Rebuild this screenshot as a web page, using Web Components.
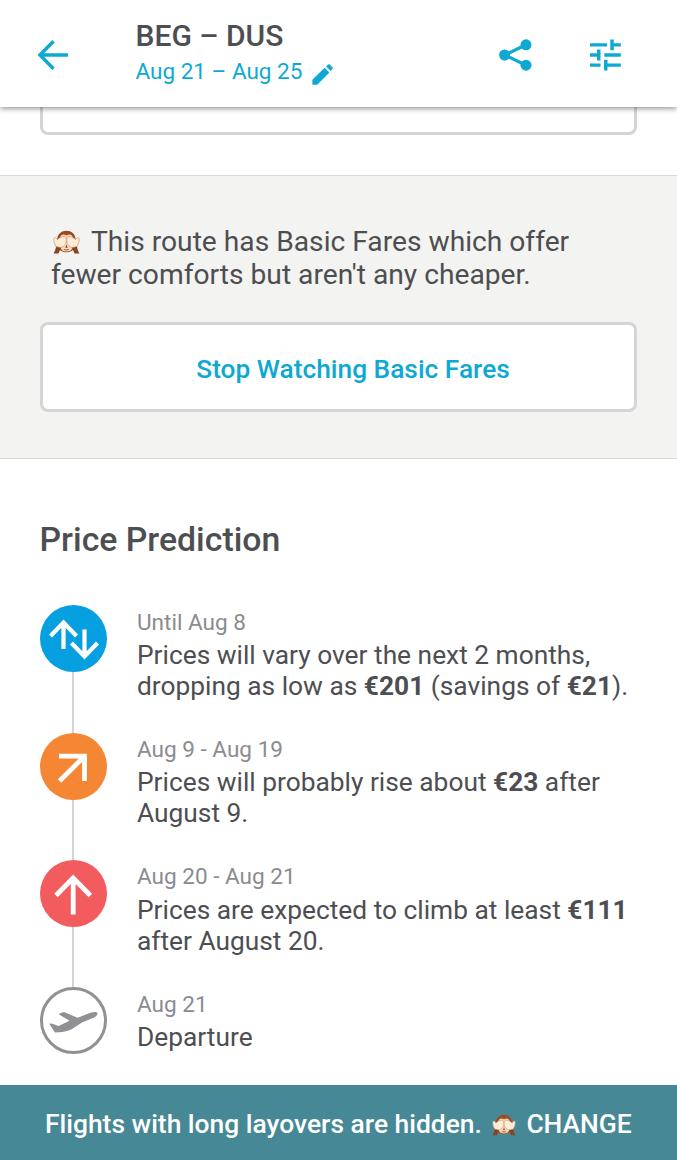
<!DOCTYPE html>
<html lang="en">
<head>
  <meta charset="UTF-8">
  <meta name="viewport" content="width=device-width, initial-scale=1.0">
  <title>BEG – DUS</title>
  <style>
    body {
      margin: 0;
      background: #fff;
      color: #4d4e52;
      font-family: Roboto, sans-serif;
      overflow: hidden;
    }
  </style>
</head>
<body>
  <watch-page>
    <trip-header slot="header" route="BEG – DUS" dates="Aug 21 – Aug 25"></trip-header>
    <card-end></card-end>
    <fare-notice>
      <span><monkey-icon></monkey-icon>This route has Basic Fares which offer<br>fewer comforts but aren't any cheaper.</span>
      <outline-button slot="action">Stop Watching Basic Fares</outline-button>
    </fare-notice>
    <price-prediction heading="Price Prediction">
      <prediction-step kind="vary" when="Until Aug 8">Prices will vary over the next 2 months,<br>dropping as low as <b>€201</b> (savings of <b>€21</b>).</prediction-step>
      <prediction-step kind="rise" when="Aug 9 - Aug 19">Prices will probably rise about <b>€23</b> after<br>August 9.</prediction-step>
      <prediction-step kind="climb" when="Aug 20 - Aug 21">Prices are expected to climb at least <b>€111</b><br>after August 20.</prediction-step>
      <prediction-step kind="departure" when="Aug 21">Departure</prediction-step>
    </price-prediction>
    <hidden-bar slot="footer" action="CHANGE">Flights with long layovers are hidden.</hidden-bar>
  </watch-page>

  <script>
    class WatchPage extends HTMLElement {
      constructor() {
        super();
        this.attachShadow({ mode: 'open' });
        this.shadowRoot.innerHTML = `
          <style>
            :host {
              display: flex;
              flex-direction: column;
              height: 1160px;
              overflow: hidden;
            }
            main {
              flex: 1;
              min-height: 0;
              overflow: hidden;
            }
          </style>
          <slot name="header"></slot>
          <main><slot></slot></main>
          <slot name="footer"></slot>
        `;
      }
    }

    class TripHeader extends HTMLElement {
      connectedCallback() {
        this.attachShadow({ mode: 'open' });
        this.shadowRoot.innerHTML = `
          <style>
            :host {
              display: flex;
              align-items: center;
              box-sizing: border-box;
              flex: none;
              height: 107px;
              padding: 2px 56px 0 38px;
              background: #fff;
              box-shadow: 0 1px 6px rgba(0, 0, 0, 0.5);
              z-index: 1;
            }
            svg {
              display: block;
              flex: none;
              color: #0ea9d3;
            }
            .trip {
              flex: 1;
              margin-left: 66.5px;
              padding-bottom: 2px;
            }
            .route {
              font-size: 30px;
              line-height: 36px;
              font-weight: 500;
              white-space: nowrap;
            }
            .dates {
              display: flex;
              align-items: center;
              font-size: 22.5px;
              line-height: 35px;
              color: #0ea9d3;
              white-space: nowrap;
            }
            .dates svg {
              margin: 5px 0 0 7px;
            }
            .actions {
              display: flex;
              align-items: center;
              gap: 58px;
            }
          </style>
          <svg width="31" height="32" viewBox="0 0 31 32" fill="none" stroke="currentColor" stroke-width="3.4">
            <path d="M30 16H2.5M15.5 2.2 1.9 16l13.6 13.8"/>
          </svg>
          <div class="trip">
            <div class="route">${this.getAttribute('route')}</div>
            <div class="dates">
              <span>${this.getAttribute('dates')}</span>
              <svg width="27" height="27" viewBox="0 0 24 24" fill="currentColor">
                <path d="M3 16.7V21h4.3L18.1 10.2l-4.300-4.300L3 16.700zM20.800 7.100a1.200 1.200 0 0 0 0-1.600l-2.300-2.300a1.200 1.200 0 0 0-1.600 0l-1.700 1.700 4 4 1.600-1.800z"/>
              </svg>
            </div>
          </div>
          <div class="actions">
            <svg width="33" height="32" viewBox="0 0 33 32" fill="currentColor">
              <path d="M27 5.8 5.7 16 27 26.2" fill="none" stroke="currentColor" stroke-width="3.2"/>
              <circle cx="5.6" cy="16" r="5.5"/>
              <circle cx="27" cy="5.8" r="5.5"/>
              <circle cx="27" cy="26.2" r="5.5"/>
            </svg>
            <svg width="31" height="32" viewBox="0 0 31 32" fill="currentColor">
              <path d="M0 4.2h17v3.4H0zM20.3.5h3.5v3.7h7v3.4h-7v3.7h-3.5zM0 14.3h7v-3.7h3.5v10.8H7v-3.7H0zM14.3 14.3h16.5v3.4H14.3zM0 24.4h10.5v3.4H0zM14 20.7h3.5v3.7h13.3v3.4H17.5v3.7H14z"/>
            </svg>
          </div>
        `;
      }
    }

    // bottom of the card that is scrolled under the header
    class CardEnd extends HTMLElement {
      constructor() {
        super();
        this.attachShadow({ mode: 'open' });
        this.shadowRoot.innerHTML = `
          <style>
            :host {
              display: block;
              height: 68px;
              padding: 0 40px;
            }
            div {
              box-sizing: border-box;
              height: 28px;
              border: 3px solid #d5d5d5;
              border-top: 0;
              border-radius: 0 0 8px 8px;
            }
          </style>
          <div></div>
        `;
      }
    }

    class MonkeyIcon extends HTMLElement {
      constructor() {
        super();
        this.attachShadow({ mode: 'open' });
        this.shadowRoot.innerHTML = `
          <style>
            :host {
              display: inline-block;
              width: 27px;
              height: 24px;
              margin: 0 11px 0 2px;
              vertical-align: -3px;
            }
            svg {
              display: block;
              width: 100%;
              height: 100%;
            }
          </style>
          <svg viewBox="0 0 27 24">
            <path d="M13.5.8c5 0 8.500 3 9 8.200v6c-1 5-4.500 7.300-9 7.300s-8.300-2.300-9.300-7.300V9C4.700 3.800 8.500.8 13.500.8z" fill="#9c4a20"/>
            <path d="M13.500 5.500c3-2 6.500-.5 6.500 3l-.5 9.500c-1 2.500-3 3.500-6 3.500s-5-1-6-3.500L7 8.500c0-3.500 3.500-5 6.500-3z" fill="#f3d9ba"/>
            <path d="M11 19.500q2.500 1 5 0" fill="none" stroke="#8f5639" stroke-width=".9"/>
            <g id="arm">
              <path d="M.6 23.500C2 21 3 18.500 3 15.500l5.300 1c-.8 2.500-1.800 4.800-2.800 7z" fill="#8a4420"/>
              <path d="M3 16.500C1.200 13.500.3 10 1 8c.8-1 2.300-.1 3.400 1.700C6 7.800 9 6.200 12 6.600c1.100.3 1.300 1.300.9 2.100.6 1 .6 2.100.1 3 .3 1.300-.2 2.500-1.100 3.100-1.300 1.600-2.600 2.500-4.200 2.800z" fill="#fcecd8" stroke="#c68a60" stroke-width=".6"/>
            </g>
            <use href="#arm" transform="matrix(-1 0 0 1 27 0)"/>
            <path d="M13.500 15v2.500M12.300 17.300h2.400" stroke="#8a4b2c" stroke-width=".9"/>
          </svg>
        `;
      }
    }

    class FareNotice extends HTMLElement {
      constructor() {
        super();
        this.attachShadow({ mode: 'open' });
        this.shadowRoot.innerHTML = `
          <style>
            :host {
              display: block;
              box-sizing: border-box;
              height: 284px;
              padding: 49px 40px 0;
              background: #f3f3f1;
              border-top: 1px solid #d8d8d8;
              border-bottom: 1px solid #d8d8d8;
            }
            p {
              margin: 0 0 31px;
              padding-left: 11px;
              font-size: 28.2px;
              line-height: 33px;
              white-space: nowrap;
            }
          </style>
          <p><slot></slot></p>
          <slot name="action"></slot>
        `;
      }
    }

    class OutlineButton extends HTMLElement {
      constructor() {
        super();
        this.attachShadow({ mode: 'open' });
        this.shadowRoot.innerHTML = `
          <style>
            :host {
              display: block;
            }
            button {
              display: block;
              box-sizing: border-box;
              width: 100%;
              height: 90px;
              padding: 3px 0 0 29px;
              border: 3px solid #d5d5d5;
              border-radius: 8px;
              background: #fff;
              color: #0ea9d3;
              font: 500 26.3px Roboto, sans-serif;
            }
          </style>
          <button><slot></slot></button>
        `;
      }
    }

    class PricePrediction extends HTMLElement {
      connectedCallback() {
        this.attachShadow({ mode: 'open' });
        this.shadowRoot.innerHTML = `
          <style>
            :host {
              display: block;
              padding: 61px 0 0 39.5px;
            }
            h2 {
              margin: 0 0 45.2px;
              font-size: 33.8px;
              line-height: 40px;
              font-weight: 500;
            }
          </style>
          <h2>${this.getAttribute('heading')}</h2>
          <slot></slot>
        `;
      }
    }

    class PredictionStep extends HTMLElement {
      constructor() {
        super();
        this.attachShadow({ mode: 'open' });
        this.icons = {
          vary: {
            color: '#069fe0',
            path: '<path stroke-width="4.2" d="M23.5 44V17M10.5 31l13-13.500 13 13.500M44.500 24.500V51M31.500 38l13 13.500 13-13.500"/>'
          },
          rise: {
            color: '#f58634',
            path: '<path d="M19 23.200h25.500V48M44 23.700 19.500 48"/>'
          },
          climb: {
            color: '#f25c5e',
            path: '<path d="M33.200 54.500V18M16 35.500 33.200 18l17.200 17.500"/>'
          },
          departure: { color: '#8f9194' }
        };
      }

      connectedCallback() {
        this.render();
      }

      generateIcon(kind) {
        const icon = this.icons[kind];
        if (kind === 'departure') {
          return `
            <circle cx="33.5" cy="33.5" r="32" fill="#fff" stroke="${icon.color}" stroke-width="3"/>
            <path fill="${icon.color}" d="M9 36.500l3.500.2 6 2.300 11-5.300-10.500-6.200 1-1.300 4-1.200 13.500 5.800 13-5c3.500-1 6.700-1.200 7 .7 0 1.500-1.300 3-4 4.200L42 35.500l-10.300 6.700c-5 2.300-10.500 3.300-16.700 3.300z"/>
          `;
        }
        return `
          <circle cx="33.5" cy="33.5" r="33.5" fill="${icon.color}"/>
          <g fill="none" stroke="#fff" stroke-width="4.8">${icon.path}</g>
        `;
      }

      render() {
        const kind = this.getAttribute('kind');
        this.shadowRoot.innerHTML = `
          <style>
            :host {
              display: flex;
              gap: 30.5px;
              height: 127.4px;
            }
            .rail {
              display: flex;
              flex-direction: column;
              align-items: center;
              width: 67px;
            }
            svg {
              display: block;
              flex: none;
            }
            .line {
              flex: 1;
              width: 2px;
              background: #d3d4d6;
            }
            .when {
              padding-top: 1.5px;
              font-size: 22.55px;
              line-height: 31px;
              color: #8b8c8f;
            }
            .text {
              font-size: 26.32px;
              line-height: 31.2px;
              padding-top: 2.2px;
              white-space: nowrap;
            }
          </style>
          <div class="rail">
            <svg width="67" height="67" viewBox="0 0 67 67">${this.generateIcon(kind)}</svg>
            ${kind === 'departure' ? '' : '<div class="line"></div>'}
          </div>
          <div>
            <div class="when">${this.getAttribute('when')}</div>
            <div class="text"><slot></slot></div>
          </div>
        `;
      }
    }

    class HiddenBar extends HTMLElement {
      connectedCallback() {
        this.attachShadow({ mode: 'open' });
        this.shadowRoot.innerHTML = `
          <style>
            :host {
              display: flex;
              align-items: center;
              box-sizing: border-box;
              flex: none;
              height: 75px;
              padding: 3px 0 0 45px;
              background: #468896;
              color: #fff;
              font-size: 26.4px;
              font-weight: 500;
              white-space: nowrap;
            }
            monkey-icon {
              width: 24px;
              height: 22px;
              margin: 2px 10px 0 10.5px;
            }
          </style>
          <span><slot></slot></span>
          <monkey-icon></monkey-icon>
          <span>${this.getAttribute('action')}</span>
        `;
      }
    }

    customElements.define('monkey-icon', MonkeyIcon);
    customElements.define('outline-button', OutlineButton);
    customElements.define('watch-page', WatchPage);
    customElements.define('trip-header', TripHeader);
    customElements.define('card-end', CardEnd);
    customElements.define('fare-notice', FareNotice);
    customElements.define('price-prediction', PricePrediction);
    customElements.define('prediction-step', PredictionStep);
    customElements.define('hidden-bar', HiddenBar);
  </script>
</body>
</html>
